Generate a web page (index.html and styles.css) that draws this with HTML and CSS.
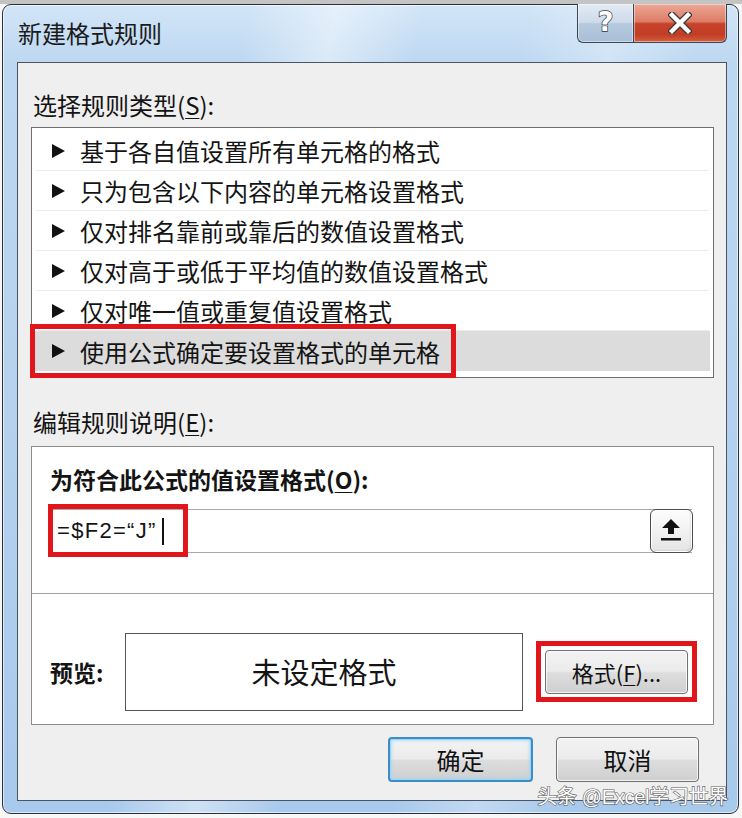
FILE: index.html
```html
<!DOCTYPE html>
<html lang="zh-CN">
<head>
    <meta charset="UTF-8">
    <title>新建格式规则</title>
    <link rel="stylesheet" href="styles.css">
</head>
<body>
    <div class="window">
        <div class="titlebar">
            <span class="title">新建格式规则</span>
            <div class="caption-btns">
                <span class="cap help">?</span>
                <span class="cap close">
                    <svg width="24" height="22" viewBox="0 0 24 22">
                        <path d="M4 3 L20 19 M20 3 L4 19" stroke="#3a3a3a" stroke-width="7" stroke-linecap="square"/>
                        <path d="M4 3 L20 19 M20 3 L4 19" stroke="#fff" stroke-width="4.4" stroke-linecap="square"/>
                    </svg>
                </span>
            </div>
        </div>

        <div class="client">
            <div class="label">选择规则类型(<u>S</u>):</div>
            <div class="list">
                <div class="row"><svg class="tri" viewBox="0 0 13 14"><polygon points="0,0 13,7 0,14"/></svg><span>基于各自值设置所有单元格的格式</span></div>
                <div class="row"><svg class="tri" viewBox="0 0 13 14"><polygon points="0,0 13,7 0,14"/></svg><span>只为包含以下内容的单元格设置格式</span></div>
                <div class="row"><svg class="tri" viewBox="0 0 13 14"><polygon points="0,0 13,7 0,14"/></svg><span>仅对排名靠前或靠后的数值设置格式</span></div>
                <div class="row"><svg class="tri" viewBox="0 0 13 14"><polygon points="0,0 13,7 0,14"/></svg><span>仅对高于或低于平均值的数值设置格式</span></div>
                <div class="row"><svg class="tri" viewBox="0 0 13 14"><polygon points="0,0 13,7 0,14"/></svg><span>仅对唯一值或重复值设置格式</span></div>
                <div class="row selected"><svg class="tri" viewBox="0 0 13 14"><polygon points="0,0 13,7 0,14"/></svg><span>使用公式确定要设置格式的单元格</span></div>
                <div class="mark mark-row"></div>
            </div>

            <div class="label label-edit">编辑规则说明(<u>E</u>):</div>
            <div class="editbox">
                <div class="edit-top">
                    <div class="bold-label">为符合此公式的值设置格式(<u>O</u>):</div>
                    <div class="formula">
                        <span class="formula-text">=$F2=“J”</span><span class="caret"></span>
                        <span class="collapse-btn">
                            <svg width="41" height="42" viewBox="0 0 41 42">
                                <path d="M20 9 L29 18 L23 18 L23 24 L17 24 L17 18 L11 18 Z" fill="#111"/>
                                <rect x="10" y="28" width="20" height="2.5" fill="#111"/>
                            </svg>
                        </span>
                        <div class="mark mark-formula"></div>
                    </div>
                </div>
                <div class="edit-bottom">
                    <div class="preview-label">预览:</div>
                    <div class="preview">未设定格式</div>
                    <div class="fmt-wrap">
                        <button class="btn fmt">格式(<u>F</u>)...</button>
                        <div class="mark mark-fmt"></div>
                    </div>
                </div>
            </div>

            <div class="actions">
                <button class="btn ok">确定</button>
                <button class="btn">取消</button>
            </div>
        </div>
    </div>
    <div class="watermark">头条 @Excel学习世界</div>
</body>
</html>
```

FILE: styles.css
```css
body {
    margin: 0;
    width: 742px;
    height: 818px;
    overflow: hidden;
    position: relative;
    background: linear-gradient(#c4c4c4 0 4px, #f7f7f7 4px);
    font-family: "Noto Sans CJK SC", "Liberation Sans", sans-serif;
    color: #141414;
}
u {
    text-decoration-thickness: 1px;
    text-underline-offset: 3px;
}
.window {
    margin: 4px 0 0 2px;
    width: 737px;
    height: 810px;
    box-sizing: border-box;
    border: 1px solid #2a3038;
    border-radius: 9px;
    padding: 0 11px 12px 14px;
    display: flex;
    flex-direction: column;
    background:
        linear-gradient(100deg, rgba(255,255,255,0) 28%, rgba(255,255,255,.45) 38%, rgba(255,255,255,0) 48%, rgba(255,255,255,0) 60%, rgba(255,255,255,.3) 70%, rgba(255,255,255,0) 80%),
        linear-gradient(#d2e5f7, #bcd7f1 60px, #b4d2ef 400px, #a7c9ec);
    box-shadow: inset 0 0 0 1px rgba(255,255,255,.6);
}
.titlebar {
    height: 57px;
    display: flex;
    justify-content: space-between;
    align-items: flex-start;
    flex-shrink: 0;
}
.title {
    font-size: 24px;
    line-height: 56px;
    padding-left: 1px;
    color: #1b1b1b;
}
.caption-btns {
    display: flex;
    margin-top: -1px;
}
.cap {
    height: 39px;
    box-sizing: border-box;
    border: 1px solid #3b4655;
    border-top: none;
    display: flex;
    align-items: center;
    justify-content: center;
    box-shadow: inset 0 0 0 1px rgba(255,255,255,.45);
}
.help {
    width: 56px;
    border-right: none;
    border-bottom-left-radius: 6px;
    background: linear-gradient(#e2eaf4, #cfdbe9 48%, #b6c9de 52%, #a9bfd8);
    font-family: "DejaVu Sans", sans-serif;
    font-weight: bold;
    font-size: 27px;
    line-height: 1;
    color: #fff;
    -webkit-text-stroke: 1.4px #2e3846;
    paint-order: stroke fill;
    padding-bottom: 3px;
}
.close {
    width: 94px;
    border-bottom-right-radius: 6px;
    background: linear-gradient(#eaa896, #de7c66 46%, #c9432b 52%, #c23d25 80%, #d2603f);
}
.client {
    flex: 1;
    box-sizing: border-box;
    border: 1px solid #4a5462;
    background: #f0efef;
    padding: 0 12px 0 13px;
    display: flex;
    flex-direction: column;
}
.label {
    margin-top: 27px;
    margin-left: 2px;
    font-size: 24px;
    line-height: 30px;
}
.label-edit {
    margin-top: 29px;
}
.list {
    position: relative;
    margin-top: 7px;
    height: 251px;
    box-sizing: border-box;
    border: 1px solid #6f6f6f;
    background: #fff;
    padding: 3px 4px;
}
.row {
    height: 40px;
    box-sizing: border-box;
    border-bottom: 1px solid #ececec;
    display: flex;
    align-items: center;
    padding-left: 16px;
    gap: 15px;
    font-size: 24px;
}
.row.selected {
    background: #dcdcdc;
    border-bottom: none;
    margin: 0 -1px 0 -4px;
    padding-left: 20px;
}
.tri {
    width: 13px;
    height: 14px;
    fill: #111;
    flex-shrink: 0;
}
.mark {
    position: absolute;
    box-sizing: border-box;
    border: 5px solid #e1161b;
    pointer-events: none;
}
.mark-row {
    left: -2px;
    top: 196px;
    width: 426px;
    height: 54px;
}
.editbox {
    margin-top: 9px;
    height: 279px;
    box-sizing: border-box;
    border: 1px solid #8c8c8c;
    background: #fff;
    display: flex;
    flex-direction: column;
}
.edit-top {
    height: 147px;
    box-sizing: border-box;
    border-bottom: 1px solid #a3a3a3;
    padding: 17px 21px 0 18px;
}
.bold-label {
    font-size: 23px;
    font-weight: bold;
    line-height: 30px;
}
.formula {
    position: relative;
    margin-top: 15px;
    height: 44px;
    box-sizing: border-box;
    border: 1px solid #a9a9a9;
    border-right: none;
    display: flex;
    align-items: center;
}
.formula-text {
    padding-left: 6px;
    font-family: "Liberation Sans", sans-serif;
    font-size: 22px;
    letter-spacing: 1.3px;
}
.caret {
    width: 2px;
    height: 27px;
    margin-left: 5px;
    background: #111;
}
.collapse-btn {
    margin: -1px -1px -1px auto;
    width: 43px;
    height: 44px;
    box-sizing: border-box;
    border: 1px solid #4d4d4d;
    border-radius: 6px;
    background: linear-gradient(#fdfdfd, #f1f1f1 50%, #e4e4e4);
    box-shadow: inset 0 0 0 1px #fff, inset -1px -1px 2px #bbb;
    display: flex;
}
.mark-formula {
    left: -3px;
    top: -6px;
    width: 140px;
    height: 53px;
}
.edit-bottom {
    flex: 1;
    display: flex;
    align-items: center;
    padding: 26px 0 0 18px;
}
.preview-label {
    width: 75px;
    font-size: 23px;
    font-weight: bold;
}
.preview {
    width: 398px;
    height: 78px;
    box-sizing: border-box;
    border: 1px solid #555;
    display: flex;
    align-items: center;
    justify-content: center;
    font-size: 29px;
    padding-bottom: 2px;
}
.fmt-wrap {
    position: relative;
    margin-left: 22px;
    display: flex;
}
.btn {
    font-family: "Noto Sans CJK SC", "Liberation Sans", sans-serif;
    color: #111;
    box-sizing: border-box;
    border: 1px solid #707070;
    border-radius: 4px;
    background: linear-gradient(#f3f3f3, #ebebeb 48%, #dddddd 52%, #cfcfcf);
    box-shadow: inset 0 0 0 1px rgba(255,255,255,.75);
    padding: 0;
}
.fmt {
    width: 143px;
    height: 44px;
    font-size: 22px;
}
.mark-fmt {
    left: -9px;
    top: -9px;
    width: 161px;
    height: 61px;
}
.actions {
    margin-top: 12px;
    margin-right: 15px;
    display: flex;
    justify-content: flex-end;
    gap: 23px;
}
.actions .btn {
    width: 143px;
    height: 45px;
    font-size: 24px;
}
.actions .ok {
    width: 145px;
    border: 2px solid #3c8cc8;
    box-shadow: inset 0 0 0 1px #9fd6f6, inset 0 0 3px 2px rgba(160,215,245,.7);
}
.watermark {
    position: absolute;
    right: 14px;
    top: 784px;
    font-family: "Liberation Sans", "Noto Sans CJK SC", sans-serif;
    font-size: 20px;
    line-height: 26px;
    color: #fff;
    -webkit-text-stroke: 1.2px #5a5a5a;
    paint-order: stroke fill;
    letter-spacing: -0.3px;
}
```
